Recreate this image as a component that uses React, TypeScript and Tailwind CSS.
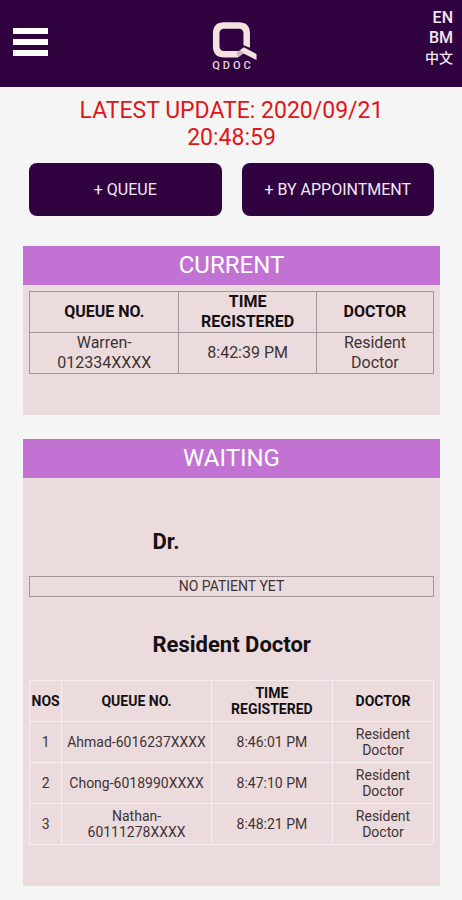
import React from 'react'

const languages = ['EN', 'BM', '中文']

const waiting = [
  { no: 1, queue: 'Ahmad-6016237XXXX', time: '8:46:01 PM', doctor: 'Resident Doctor' },
  { no: 2, queue: 'Chong-6018990XXXX', time: '8:47:10 PM', doctor: 'Resident Doctor' },
  { no: 3, queue: 'Nathan-60111278XXXX', time: '8:48:21 PM', doctor: 'Resident Doctor' },
]

const Logo: React.FC = () => (
  <div className="flex flex-col items-center">
    <svg width="50" height="39" viewBox="2 0 50 39" aria-hidden="true">
      <path d="M32 33.200H18.200Q10.200 33.200 10.200 25.200V12.500Q10.200 4.500 18.200 4.500H32.700Q40.700 4.500 40.700 12.500V27" fill="none" stroke="#f3e2e1" strokeWidth="6.500" />
      <path d="M37 24L44.500 27V31L37 27.500Z" fill="#300340" />
      <path d="M34.500 28.700L38 26.300L50.500 33V39L37.500 32.500L33.500 34Z" fill="#f3e2e1" />
      <path d="M30.500 31.500L34.500 28.700L37.500 32.500L32 36.450Z" fill="#cdb8bf" />
    </svg>
    <span className="text-[11px] leading-3 font-medium tracking-[3px] text-[#e6d6dc]">QDOC</span>
  </div>
)

const Header: React.FC = () => (
  <header className="flex h-[87px] justify-between bg-[#300340] pr-[9px] pl-[13px]">
    <div className="flex flex-1 items-center">
      <button type="button" aria-label="Menu" className="flex flex-col gap-[5px] pb-1">
        <span className="h-[6px] w-[35px] bg-white" />
        <span className="h-[6px] w-[35px] bg-white" />
        <span className="h-[6px] w-[35px] bg-white" />
      </button>
    </div>
    <div className="pt-[21px]">
      <Logo />
    </div>
    <nav className="flex flex-1 flex-col items-end pt-2 text-base leading-5 font-medium text-[#f1e8f3]">
      {languages.map((lang) => (
        <a key={lang} href="#" className="last:text-sm last:leading-5">{lang}</a>
      ))}
    </nav>
  </header>
)

const Card: React.FC<{ title: string; children: React.ReactNode }> = ({ title, children }) => (
  <section className="bg-[#ecdbdc]">
    <h2 className="bg-[#c172d3] text-center text-2xl leading-[39px] text-white">{title}</h2>
    <div className="px-[6px] pt-[6px] pb-[41px]">{children}</div>
  </section>
)

const DoctorName: React.FC<{ name: string }> = ({ name }) => (
  <h3 className="mx-auto w-[158px] text-[22px] leading-7 font-bold whitespace-nowrap text-[#141012]">{name}</h3>
)

const currentCell = 'border border-[#a3979a] px-4 leading-5'
const waitingCell = 'border border-[#f7eeef] py-1 leading-4'

const App: React.FC = () => {
  return (
    <div className="min-h-screen bg-[#f5f5f5] pb-3 font-[Roboto,'Noto_Sans_CJK_SC',sans-serif] text-[#3d3336]">
      <Header />
      <main className="flex flex-col gap-6 pt-[10px] pr-[22px] pl-[23px]">
        <div>
          <p className="px-10 text-center text-[23px] leading-[27px] text-[#e01517]">LATEST UPDATE: 2020/09/21 20:48:59</p>
          <div className="mt-3 mb-[6px] grid grid-cols-2 gap-5 px-[6px] text-base text-[#f1e8f3]">
            <button type="button" className="h-[53px] rounded-lg bg-[#300340]">+ QUEUE</button>
            <button type="button" className="h-[53px] rounded-lg bg-[#300340]">+ BY APPOINTMENT</button>
          </div>
        </div>

        <Card title="CURRENT">
          <table className="w-full table-fixed border-collapse text-center text-base">
            <thead className="text-[#141012]">
              <tr>
                <th className={`w-[37%] ${currentCell}`}>QUEUE NO.</th>
                <th className={`w-[34%] ${currentCell}`}>TIME REGISTERED</th>
                <th className={`w-[29%] ${currentCell}`}>DOCTOR</th>
              </tr>
            </thead>
            <tbody>
              <tr>
                <td className={currentCell}>Warren-012334XXXX</td>
                <td className={currentCell}>8:42:39 PM</td>
                <td className={currentCell}>Resident Doctor</td>
              </tr>
            </tbody>
          </table>
        </Card>

        <Card title="WAITING">
          <div className="pt-11">
            <DoctorName name="Dr." />
            <p className="mt-5 mb-[34px] border border-[#a3979a] text-center text-sm leading-[19px]">NO PATIENT YET</p>
            <DoctorName name="Resident Doctor" />
            <table className="mt-[21px] w-full table-fixed border-collapse text-center text-sm">
              <thead className="text-[#141012]">
                <tr>
                  <th className={`w-[8%] ${waitingCell}`}>NOS</th>
                  <th className={`w-[37%] ${waitingCell}`}>QUEUE NO.</th>
                  <th className={`w-[30%] px-4 ${waitingCell}`}>TIME REGISTERED</th>
                  <th className={`w-[25%] ${waitingCell}`}>DOCTOR</th>
                </tr>
              </thead>
              <tbody>
                {waiting.map((row) => (
                  <tr key={row.no}>
                    <td className={waitingCell}>{row.no}</td>
                    <td className={`px-1 ${waitingCell}`}>{row.queue}</td>
                    <td className={waitingCell}>{row.time}</td>
                    <td className={`px-4 ${waitingCell}`}>{row.doctor}</td>
                  </tr>
                ))}
              </tbody>
            </table>
          </div>
        </Card>
      </main>
    </div>
  )
}

export default App
